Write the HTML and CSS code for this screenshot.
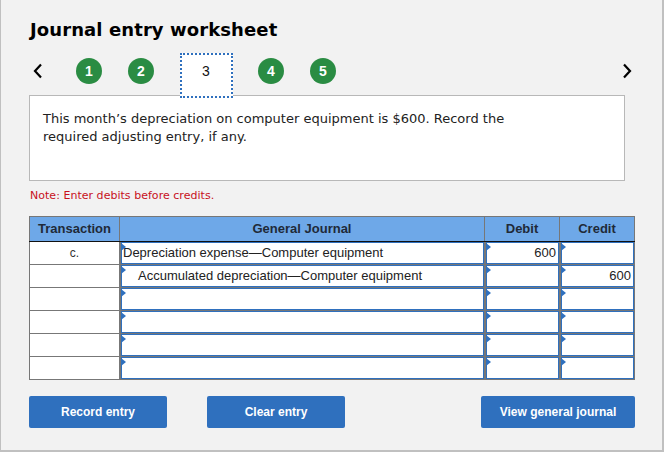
FILE: index.html
```html
<!DOCTYPE html>
<html lang="en">
<head>
<meta charset="utf-8">
<title>Journal entry worksheet</title>
<link rel="stylesheet" href="styles.css">
</head>
<body>
<main class="frame">
  <h1 class="title">Journal entry worksheet</h1>
  <nav class="steps">
    <svg class="chev chev-left" width="12" height="16" viewBox="0 0 12 16"><path d="M9 1.500 3 8l6 6.500" fill="none" stroke="#000" stroke-width="2.200"/></svg>
    <span class="dot dot-1">1</span>
    <span class="dot dot-2">2</span>
    <span class="current">3</span>
    <span class="dot dot-4">4</span>
    <span class="dot dot-5">5</span>
    <svg class="chev chev-right" width="12" height="16" viewBox="0 0 12 16"><path d="M3 1.500 9 8l-6 6.500" fill="none" stroke="#000" stroke-width="2.200"/></svg>
  </nav>
  <section class="prompt">This month’s depreciation on computer equipment is $600. Record the required adjusting entry, if any.</section>
  <p class="note">Note: Enter debits before credits.</p>
  <table class="journal">
    <thead>
      <tr><th class="c-t">Transaction</th><th class="c-j">General Journal</th><th class="c-d">Debit</th><th class="c-c">Credit</th></tr>
    </thead>
    <tbody>
      <tr><td class="tx">c.</td><td class="in"><div class="field">Depreciation expense—Computer equipment</div></td><td class="in"><div class="field num">600</div></td><td class="in"><div class="field num"></div></td></tr>
      <tr><td class="tx"></td><td class="in"><div class="field indent">Accumulated depreciation—Computer equipment</div></td><td class="in"><div class="field num"></div></td><td class="in"><div class="field num">600</div></td></tr>
      <tr><td class="tx"></td><td class="in"><div class="field"></div></td><td class="in"><div class="field"></div></td><td class="in"><div class="field"></div></td></tr>
      <tr><td class="tx"></td><td class="in"><div class="field"></div></td><td class="in"><div class="field"></div></td><td class="in"><div class="field"></div></td></tr>
      <tr><td class="tx"></td><td class="in"><div class="field"></div></td><td class="in"><div class="field"></div></td><td class="in"><div class="field"></div></td></tr>
      <tr><td class="tx"></td><td class="in"><div class="field"></div></td><td class="in"><div class="field"></div></td><td class="in"><div class="field"></div></td></tr>
    </tbody>
  </table>
  <div class="actions">
    <button class="btn btn-record">Record entry</button>
    <button class="btn btn-clear">Clear entry</button>
    <button class="btn btn-view">View general journal</button>
  </div>
</main>
</body>
</html>
```
FILE: styles.css
```css
* { box-sizing: border-box; }
html, body { margin: 0; padding: 0; }
body { width: 665px; height: 453px; background: #fff; overflow: hidden; font-family: "Liberation Sans", Arial, sans-serif; }
.frame {
  width: 664px; height: 452px;
  background: #f2f2f2;
  border: 1px solid #c0c0c0; border-width: 0 2px 2px 1px;
  padding: 20px 27px 0 28px;
}
.title { margin: 0 0 0 1px; font: bold 18px/20px "DejaVu Sans", Verdana, sans-serif; letter-spacing: 0.1px; color: #000; }
.steps { display: flex; align-items: flex-start; height: 42px; margin-top: 13px; position: relative; }
.chev { margin-top: 10px; }
.chev-left { margin-left: 3px; }
.chev-right { margin-left: auto; margin-right: 2px; }
.dot {
  width: 26px; height: 26px; border-radius: 50%; margin-top: 5px;
  background: #2a8c43; color: #fff;
  font: bold 14px/26px "Liberation Sans", Arial, sans-serif; text-align: center;
}
.dot-1 { margin-left: 32px; }
.dot-2 { margin-left: 26px; }
.dot-4 { margin-left: 25px; }
.dot-5 { margin-left: 26px; }
.current {
  width: 53px; height: 45px; margin-left: 26px; padding-right: 1px;
  background: #fff; border: 2px dotted #2f70be;
  font: 14px/32px "Liberation Sans", Arial, sans-serif; color: #111; text-align: center;
  position: relative; z-index: 1;
}
.prompt {
  height: 86px; width: 596px;
  background: #fff; border: 1px solid #b8b8b8;
  padding: 14px 100px 0 13px;
  font: 13px/18px "DejaVu Sans", Verdana, sans-serif; color: #222;
}
.note { margin: 8px 0 0 1px; font: 11px/14px "DejaVu Sans", Verdana, sans-serif; letter-spacing: 0.03px; color: #c8101c; }
.journal {
  margin-top: 13px; width: 605px; table-layout: fixed;
  border-collapse: collapse; background: #fff;
  border: 1px solid #777;
}
.journal th {
  height: 25px; padding: 0; background: #6ea8e8; color: #1f2a38;
  font: bold 13px/14px "Liberation Sans", Arial, sans-serif; text-align: center;
  border: 1px solid #777; border-bottom: 1px solid #111; border-left-color: #111;
}
.journal th:first-child { border-left-color: #777; }
.c-t { width: 90px; }
.c-j { width: 365px; }
.c-d { width: 75px; }
.c-c { width: 75px; }
.journal td { height: 23px; padding: 0; border: 1px solid #777; }
.journal .in { background: #777; }
.tx { text-align: center; font-size: 12px; color: #333; }
.field {
  position: relative; height: 22px; margin-left: 1px; background: #fff;
  border: 1px solid #2f70be;
  font: 13px/20px "Liberation Sans", Arial, sans-serif; color: #222;
  padding: 0 0 0 1px; white-space: nowrap;
}
.field::before {
  content: ""; position: absolute; left: -1px; top: 0;
  border-left: 5px solid #2f70be;
  border-top: 4px solid transparent; border-bottom: 4px solid transparent;
}
.indent { padding-left: 16px; }
.num { text-align: right; padding-right: 2px; }
.actions { display: flex; margin-top: 16px; }
.btn {
  height: 32px; border: 0; border-radius: 2px; padding: 0;
  background: #2f70be; color: #fff;
  font: bold 12px/16px "Liberation Sans", Arial, sans-serif;
}
.btn-record { width: 138px; }
.btn-clear { width: 138px; margin-left: 40px; }
.btn-view { width: 154px; margin-left: auto; }
```
